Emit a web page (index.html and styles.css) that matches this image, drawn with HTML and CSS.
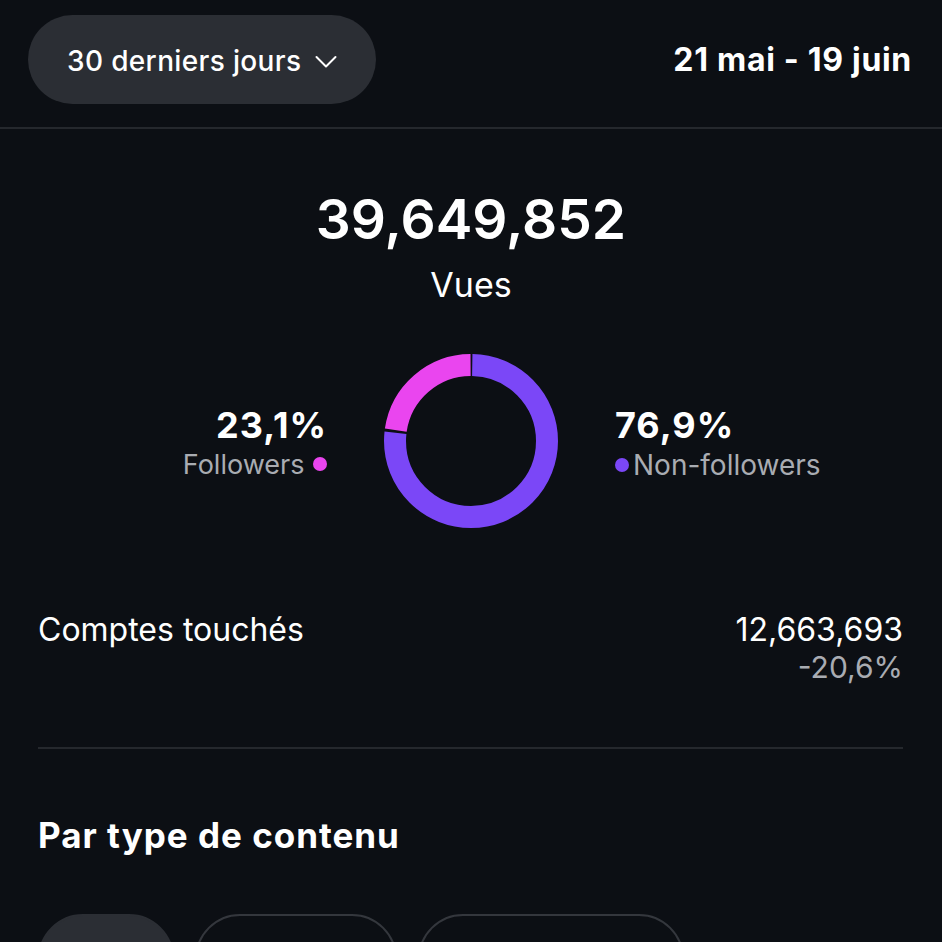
FILE: index.html
```html
<!DOCTYPE html>
<html lang="fr">
<head>
    <meta charset="UTF-8">
    <title>Vues</title>
    <link rel="stylesheet" href="styles.css">
</head>
<body>
    <div class="top">
        <div class="range">
            <span>30 derniers jours</span>
            <svg class="chev" width="22" height="14" viewBox="0 0 22 14">
                <path d="M1.5 2 L11 11.5 L20.5 2" fill="none" stroke="#fff" stroke-width="2" stroke-linecap="round" stroke-linejoin="round"/>
            </svg>
        </div>
        <div class="dates">21 mai - 19 juin</div>
    </div>

    <div class="total">
        <div class="big">39,649,852</div>
        <div class="unit">Vues</div>
    </div>

    <div class="split">
        <div class="side left">
            <div class="pct">23,1%</div>
            <div class="lbl">Followers <i class="dot pink"></i></div>
        </div>
        <svg class="donut" width="174" height="174" viewBox="0 0 174 174">
            <g transform="rotate(-90 87 87)">
                <circle cx="87" cy="87" r="76" fill="none" stroke="#7b47f7" stroke-width="22"
                        stroke-dasharray="364.7 112.8" stroke-dashoffset="-1.3"/>
                <circle cx="87" cy="87" r="76" fill="none" stroke="#ea45ef" stroke-width="22"
                        stroke-dasharray="107.8 369.7" stroke-dashoffset="-368.5"/>
            </g>
        </svg>
        <div class="side right">
            <div class="pct">76,9%</div>
            <div class="lbl"><i class="dot purple"></i>Non-followers</div>
        </div>
    </div>

    <div class="wrap">
        <div class="row">
            <div class="name">Comptes touchés</div>
            <div class="vals">
                <div>12,663,693</div>
                <div class="delta">-20,6%</div>
            </div>
        </div>
        <div class="line"></div>
        <h2>Par type de contenu</h2>
        <div class="tabs">
            <div class="tab on"></div>
            <div class="tab t2"></div>
            <div class="tab t3"></div>
        </div>
    </div>
</body>
</html>
```

FILE: styles.css
```css
* {
    padding: 0;
    margin: 0;
    box-sizing: border-box;
}

body {
    background-color: #0c0f14;
    color: #fff;
    font-family: Inter, "Noto Sans", sans-serif;
    overflow: hidden;
}

.top {
    display: flex;
    justify-content: space-between;
    align-items: center;
    padding: 15px 30px 23px 28px;
    border-bottom: 2px solid #25282d;
}

.range {
    display: flex;
    align-items: center;
    gap: 14px;
    height: 89px;
    width: 348px;
    padding: 3px 0 0 39px;
    border-radius: 45px;
    background-color: #2b2e34;
    font-size: 28px;
    font-weight: 500;
    letter-spacing: 0.35px;
}

.chev {
    margin-top: 2px;
}

.dates {
    font-size: 32px;
    font-weight: 700;
    letter-spacing: 0.7px;
}

.total {
    text-align: center;
    padding-top: 57px;
}

.big {
    font-size: 55px;
    font-weight: 600;
    line-height: 66px;
}

.unit {
    font-size: 34px;
    line-height: 40px;
    margin-top: 13px;
}

.split {
    display: flex;
    justify-content: center;
    align-items: center;
    gap: 57px;
    margin-top: 49px;
}

.side {
    width: 230px;
    margin-top: 4px;
    white-space: nowrap;
}

.left {
    text-align: right;
}

.pct {
    font-size: 36px;
    font-weight: 700;
    line-height: 42px;
    letter-spacing: 1px;
}

.lbl {
    font-size: 28px;
    color: #a9acb2;
    line-height: 34px;
    margin-top: 2px;
}

.left .lbl {
    font-size: 27px;
}

.dot {
    display: inline-block;
    width: 14px;
    height: 14px;
    border-radius: 50%;
    vertical-align: 3px;
}

.pink {
    background-color: #ea45ef;
    margin-left: 1px;
}

.purple {
    background-color: #7b47f7;
    margin-right: 4px;
}

.wrap {
    padding: 0 39px 0 38px;
}

.row {
    display: flex;
    justify-content: space-between;
    margin-top: 83px;
    font-size: 32px;
    line-height: 38px;
}

.vals {
    text-align: right;
}

.delta {
    color: #a9acb2;
    font-size: 30px;
    line-height: 36px;
}

.line {
    height: 2px;
    background-color: #25282d;
    margin-top: 62px;
}

h2 {
    font-size: 35px;
    font-weight: 700;
    line-height: 42px;
    letter-spacing: 1px;
    margin-top: 65px;
}

.tabs {
    display: flex;
    gap: 21px;
    margin-top: 58px;
}

.tab {
    height: 90px;
    border-radius: 45px;
    border: 2px solid #34373d;
}

.on {
    width: 136px;
    background-color: #2b2e34;
    border-color: #2b2e34;
}

.t2 {
    width: 202px;
}

.t3 {
    width: 266px;
}
```
